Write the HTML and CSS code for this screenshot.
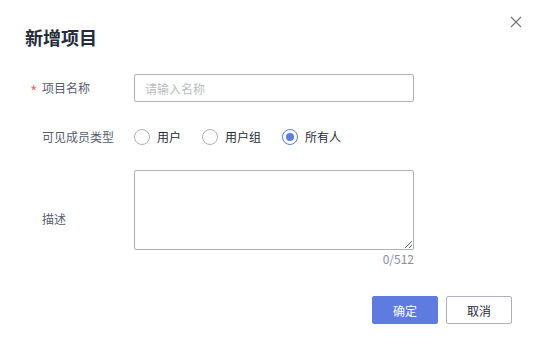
FILE: index.html
```html
<!DOCTYPE html>
<html>
  <head>
    <title>新增项目</title>
    <link rel="stylesheet" href="styles.css">
  </head>
  <body>
    <div class="dialog">
      <div class="header">
        <h1>新增项目</h1>
        <button class="close" aria-label="关闭">
          <svg width="12" height="12" viewBox="0 0 12 12"><path d="M1 1L11 11M11 1L1 11" stroke="#71757f" stroke-width="1.2" fill="none"/></svg>
        </button>
      </div>
      <form class="form">
        <div class="row row-name">
          <label class="label"><span class="star">*</span>项目名称</label>
          <div class="control">
            <input class="input" type="text" placeholder="请输入名称" />
          </div>
        </div>
        <div class="row row-type">
          <label class="label"><span class="star"></span>可见成员类型</label>
          <div class="control radios">
            <span class="radio"><span class="dot"></span>用户</span>
            <span class="radio"><span class="dot"></span>用户组</span>
            <span class="radio checked"><span class="dot"></span>所有人</span>
          </div>
        </div>
        <div class="row row-desc">
          <label class="label"><span class="star"></span>描述</label>
          <div class="control">
            <textarea class="textarea"></textarea>
            <div class="count">0/512</div>
          </div>
        </div>
      </form>
      <div class="footer">
        <button class="btn primary">确定</button>
        <button class="btn">取消</button>
      </div>
    </div>
  </body>
</html>
```

FILE: styles.css
```css
body{
    margin: 0;
    background: #fff;
    font-family: "Noto Sans CJK SC", "Noto Sans", sans-serif;
    font-size: 12px;
    color: #252b3a;
}
.dialog{
    width: 538px;
    height: 349px;
    box-sizing: border-box;
    padding: 0 26px 0 0;
}
.header{
    display: flex;
    justify-content: space-between;
    align-items: flex-start;
    padding-left: 25px;
}
.header h1{
    margin: 26px 0 0 0;
    font-size: 18px;
    line-height: 22px;
    font-weight: bold;
    color: #252b3a;
}
.close{
    margin: 16px -10px 0 0;
    padding: 0;
    border: 0;
    background: none;
    width: 12px;
    height: 12px;
    cursor: pointer;
}
.form{
    padding-left: 30px;
}
.row{
    display: flex;
    align-items: center;
}
.row-name{
    margin-top: 26px;
}
.row-type{
    margin-top: 26px;
}
.row-desc{
    margin-top: 24px;
}
.label{
    width: 104px;
    flex: none;
    display: flex;
    align-items: center;
    color: #575d6c;
    line-height: 18px;
}
.star{
    width: 12px;
    color: #f66f6a;
    font-size: 16px;
    line-height: 14px;
    padding-top: 5px;
}
.control{
    width: 280px;
}
.input{
    display: block;
    width: 280px;
    height: 28px;
    box-sizing: border-box;
    border: 1px solid #adb0b8;
    border-radius: 2px;
    padding: 0 10px;
    font-family: inherit;
    font-size: 12px;
    color: #252b3a;
    outline: none;
}
.input::placeholder{
    color: #babbc0;
}
.radios{
    display: flex;
    align-items: center;
    height: 16px;
}
.radio{
    display: flex;
    align-items: center;
    margin-right: 21px;
    color: #252b3a;
    line-height: 16px;
}
.dot{
    width: 16px;
    height: 16px;
    box-sizing: border-box;
    border: 1px solid #adb0b8;
    border-radius: 50%;
    margin-right: 7px;
    display: flex;
    align-items: center;
    justify-content: center;
}
.radio.checked .dot{
    border-color: #5e7ce0;
}
.radio.checked .dot::after{
    content: "";
    width: 8px;
    height: 8px;
    border-radius: 50%;
    background: #5e7ce0;
}
.textarea{
    display: block;
    width: 280px;
    height: 80px;
    box-sizing: border-box;
    border: 1px solid #adb0b8;
    border-radius: 2px;
    padding: 4px 10px;
    font-family: inherit;
    font-size: 12px;
    resize: vertical;
    outline: none;
}
.count{
    text-align: right;
    color: #8a8e99;
    line-height: 18px;
}
.footer{
    display: flex;
    justify-content: flex-end;
    gap: 8px;
    margin-top: 28px;
}
.btn{
    width: 66px;
    height: 28px;
    box-sizing: border-box;
    border: 1px solid #adb0b8;
    border-radius: 2px;
    background: #fff;
    color: #252b3a;
    font-family: inherit;
    font-size: 12px;
    padding: 0;
    cursor: pointer;
}
.btn.primary{
    background: #5e7ce0;
    border-color: #5e7ce0;
    color: #fff;
}
```
